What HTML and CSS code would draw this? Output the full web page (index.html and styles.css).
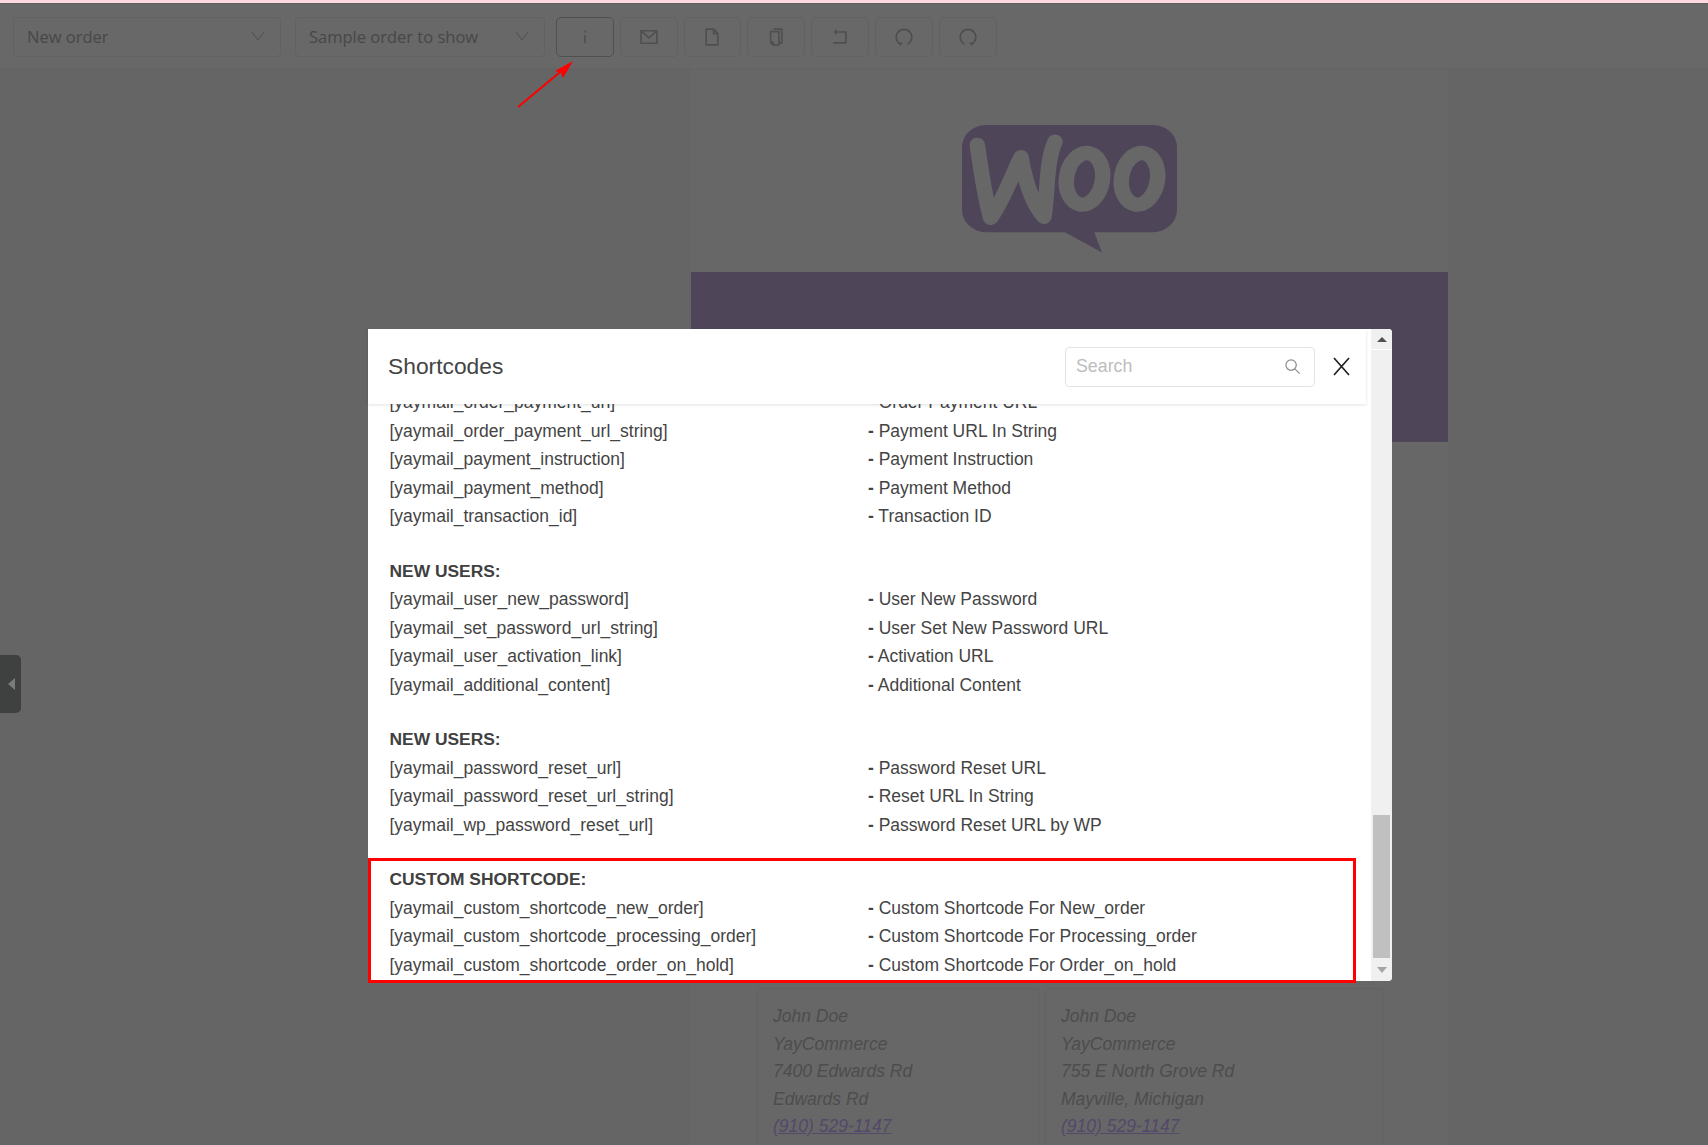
FILE: index.html
```html
<!DOCTYPE html>
<html lang="en">
<head>
<meta charset="utf-8">
<title>Shortcodes</title>
<link rel="stylesheet" href="styles.css">
</head>
<body>
<div class="pink"></div>
<header class="toolbar">
  <div class="select select-a"><span>New order</span><svg class="chev" viewBox="0 0 14 10"><path d="M1 1l6 8 6-8"/></svg></div>
  <div class="select select-b"><span>Sample order to show</span><svg class="chev" viewBox="0 0 14 10"><path d="M1 1l6 8 6-8"/></svg></div>
  <div class="btns">
    <div class="btn btn-active"><svg class="ico" viewBox="0 0 24 24"><path d="M12 4.500v2M12 9.500v10"/></svg></div>
    <div class="btn"><svg class="ico" viewBox="0 0 24 24"><path d="M2.500 4.500h19v15h-19zM2.500 4.500l9.500 8.500 9.500-8.500"/></svg></div>
    <div class="btn"><svg class="ico" viewBox="0 0 24 24"><path d="M5 2.500h9l5 5.500v13.500h-14zM14 2.500v5.500h5"/></svg></div>
    <div class="btn"><svg class="ico" viewBox="0 0 24 24"><path d="M9 2.500h10v16.500h-3.500M5.500 5.500h10v16h-7l-3-3zM5.500 18.500h3v3"/></svg></div>
    <div class="btn"><svg class="ico" viewBox="0 0 24 24"><path d="M8 6h11v13h-15"/><path class="ico-solid" d="M8 2.500v7L4 6z"/></svg></div>
    <div class="btn"><svg class="ico" viewBox="0 0 24 24"><path d="M8 20.500a9.300 9.300 0 1 1 8 0"/><path class="ico-solid" d="M5 18.500l6 .5-4 3.500z"/></svg></div>
    <div class="btn"><svg class="ico" viewBox="0 0 24 24"><path d="M8 20.500a9.300 9.300 0 1 1 8 0"/><path class="ico-solid" d="M19 18.500l-6 .5 4 3.500z"/></svg></div>
  </div>
</header>

<main class="stage">
  <section class="email">
    <div class="logo-wrap">
      <svg class="logo" viewBox="0 0 215 138" preserveAspectRatio="none">
        <rect class="logo-fill" width="215" height="115.500" rx="24"/>
        <path class="logo-fill" d="M102 115l38 22.500-8-22.500z"/>
        <path class="logo-cut" d="M15.400 21.400C19 50 23 78 28.600 100 38 88 48 60 59 34.600 63 60 70 84 82 99 86 70 84 40 93 18"/>
        <ellipse class="logo-cut" cx="122.500" cy="58" rx="18" ry="28" transform="rotate(8 122.500 58)"/>
        <ellipse class="logo-cut" cx="177.500" cy="58" rx="18" ry="28" transform="rotate(8 177.500 58)"/>
      </svg>
    </div>
    <div class="email-head"></div>
    <div class="addresses">
      <address class="addr addr-a">John Doe<br>YayCommerce<br>7400 Edwards Rd<br>Edwards Rd<br><a href="#">(910) 529-1147</a></address>
      <address class="addr addr-b">John Doe<br>YayCommerce<br>755 E North Grove Rd<br>Mayville, Michigan<br><a href="#">(910) 529-1147</a></address>
    </div>
  </section>
</main>

<div class="handle"><i class="handle-arrow"></i></div>

<svg class="pointer" viewBox="0 0 70 60"><path class="pointer-line" d="M1 49L48 10"/><path class="pointer-head" d="M56 3L38 13l6 2 2 5z"/></svg>

<div class="modal">
  <div class="modal-main">
    <div class="modal-head">
      <h2 class="modal-title">Shortcodes</h2>
      <div class="search"><input class="search-input" placeholder="Search">
        <svg class="search-ico" viewBox="0 0 18 18"><circle cx="7.500" cy="7.500" r="5.500"/><path d="M11.500 11.500l5 5"/></svg>
      </div>
      <svg class="close" viewBox="0 0 17 19" preserveAspectRatio="none"><path d="M1 1l15 17M16 1L1 18"/></svg>
    </div>
    <div class="modal-body">
      <div class="group group-first">
        <div class="row"><span>[yaymail_order_payment_url]</span><span><b>-</b> Order Payment URL</span></div>
        <div class="row"><span>[yaymail_order_payment_url_string]</span><span><b>-</b> Payment URL In String</span></div>
        <div class="row"><span>[yaymail_payment_instruction]</span><span><b>-</b> Payment Instruction</span></div>
        <div class="row"><span>[yaymail_payment_method]</span><span><b>-</b> Payment Method</span></div>
        <div class="row"><span>[yaymail_transaction_id]</span><span><b>-</b> Transaction ID</span></div>
      </div>
      <div class="group">
        <h3 class="group-title">NEW USERS:</h3>
        <div class="row"><span>[yaymail_user_new_password]</span><span><b>-</b> User New Password</span></div>
        <div class="row"><span>[yaymail_set_password_url_string]</span><span><b>-</b> User Set New Password URL</span></div>
        <div class="row"><span>[yaymail_user_activation_link]</span><span><b>-</b> Activation URL</span></div>
        <div class="row"><span>[yaymail_additional_content]</span><span><b>-</b> Additional Content</span></div>
      </div>
      <div class="group">
        <h3 class="group-title">NEW USERS:</h3>
        <div class="row"><span>[yaymail_password_reset_url]</span><span><b>-</b> Password Reset URL</span></div>
        <div class="row"><span>[yaymail_password_reset_url_string]</span><span><b>-</b> Reset URL In String</span></div>
        <div class="row"><span>[yaymail_wp_password_reset_url]</span><span><b>-</b> Password Reset URL by WP</span></div>
      </div>
      <div class="group">
        <h3 class="group-title">CUSTOM SHORTCODE:</h3>
        <div class="row"><span>[yaymail_custom_shortcode_new_order]</span><span><b>-</b> Custom Shortcode For New_order</span></div>
        <div class="row"><span>[yaymail_custom_shortcode_processing_order]</span><span><b>-</b> Custom Shortcode For Processing_order</span></div>
        <div class="row"><span>[yaymail_custom_shortcode_order_on_hold]</span><span><b>-</b> Custom Shortcode For Order_on_hold</span></div>
      </div>
    </div>
  </div>
  <div class="scrollbar">
    <div class="sb-btn"><i class="sb-up"></i></div>
    <div class="sb-track"><div class="sb-thumb"></div></div>
    <div class="sb-btn"><i class="sb-down"></i></div>
  </div>
  <div class="highlight"></div>
</div>
</body>
</html>
```

FILE: styles.css
```css
* { box-sizing: border-box; }
html, body { margin: 0; height: 1145px; overflow: hidden; }
body {
  position: relative;
  width: 1708px;
  background: #656565;
  font-family: "Liberation Sans", Arial, sans-serif;
  color: #4a4a4a;
}

.pink { height: 3px; background: #ffd9e2; }

.toolbar {
  display: flex;
  align-items: flex-start;
  height: 66px;
  padding: 13px 0 0 13px;
  background: #686868;
  border-top: 1px solid #5f5f5f;
  border-bottom: 1px solid #646464;
}
.select {
  display: flex;
  align-items: center;
  justify-content: space-between;
  height: 40px;
  padding: 0 15px 2px 13px;
  border: 1px solid #626262;
  border-radius: 4px;
  font-family: "Open Sans", sans-serif;
  font-size: 16.500px;
  color: #474747;
}
.select-a { width: 268px; }
.select-b { width: 250px; margin-left: 14px; }
.chev { width: 14px; height: 10px; fill: none; stroke: #575757; stroke-width: 1.2; }
.btns { display: flex; gap: 6px; margin-left: 11px; }
.btn {
  display: flex;
  align-items: center;
  justify-content: center;
  width: 57.800px;
  height: 40px;
  border: 1px solid #626262;
  border-radius: 5px;
}
.btn-active { border-color: #505050; }
.ico { width: 20px; height: 20px; fill: none; stroke: #4f4f4f; stroke-width: 2; }
.ico-solid { fill: #4f4f4f; stroke: none; }

.stage { padding-left: 691px; }
.email { width: 757px; height: 1076px; background: #676767; }
.logo-wrap { display: flex; justify-content: center; padding-top: 56px; }
.logo { display: block; width: 215px; height: 128px; }
.logo-fill { fill: #4e4558; }
.logo-cut { fill: none; stroke: #676767; stroke-width: 15.500; stroke-linecap: round; stroke-linejoin: round; }
.email-head { height: 170px; margin-top: 19px; background: #4e4558; }

.addresses { display: flex; gap: 6px; margin: 546px 0 0 66px; }
.addr {
  height: 200px;
  padding: 14px 15px;
  border: 1px solid #626262;
  font-size: 17.500px;
  line-height: 27.500px;
  color: #4d4d4d;
}
.addr a { color: #54486a; }
.addr-a { width: 282px; }
.addr-b { width: 338px; }

.handle {
  position: absolute;
  left: 0;
  top: 655px;
  display: flex;
  align-items: center;
  width: 21px;
  height: 58px;
  padding-left: 8px;
  background: #3f4141;
  border-radius: 0 5px 5px 0;
}
.handle-arrow {
  width: 0;
  height: 0;
  border: 6px solid transparent;
  border-left-width: 0;
  border-right: 7px solid #7a7a7a;
}

.pointer { position: absolute; left: 517px; top: 58px; width: 70px; height: 60px; }
.pointer-line { fill: none; stroke: #f00; stroke-width: 2; }
.pointer-head { fill: #f00; }

.modal {
  position: absolute;
  left: 368px;
  top: 329px;
  display: flex;
  width: 1024px;
  height: 652px;
  background: #fff;
  border-radius: 4px;
}
.modal-main { display: flex; flex-direction: column; width: 998px; min-height: 0; }
.modal-head {
  position: relative;
  z-index: 1;
  display: flex;
  align-items: center;
  flex: none;
  height: 75px;
  padding: 0 16px 0 20px;
  background: #fff;
  box-shadow: 0 1px 3px rgba(0, 0, 0, .12);
}
.modal-title { margin: 0; flex: 1; font-size: 22.800px; font-weight: 400; color: #444; }
.search { position: relative; width: 250px; height: 40px; }
.search-input {
  width: 100%;
  height: 100%;
  padding: 0 40px 0 10px;
  border: 1px solid #e3e3e3;
  border-radius: 4px;
  font: 17.800px "Liberation Sans", Arial, sans-serif;
  outline: 0;
}
.search-input::placeholder { color: #bdbdbd; opacity: 1; }
.search-ico {
  position: absolute;
  right: 14px;
  top: 11px;
  width: 17px;
  height: 17px;
  fill: none;
  stroke: #8c8c8c;
  stroke-width: 1.300;
}
.close { flex: none; width: 17px; height: 19px; margin-left: 18px; fill: none; stroke: #222; stroke-width: 1.700; }

.modal-body { flex: 1; min-height: 0; overflow: hidden; padding-left: 21.500px; font-size: 17.500px; line-height: 28.600px; color: #444; }
.group { margin-bottom: 25.600px; }
.group-first { margin-top: -16px; }
.group-title { margin: 0; font-size: 17.400px; font-weight: 700; line-height: 28px; padding-bottom: .6px; color: #404040; }
.row { display: grid; grid-template-columns: 478.500px 1fr; }

.scrollbar {
  display: flex;
  flex-direction: column;
  width: 21px;
  margin-left: 5px;
  background: #f0f0f0;
  border-radius: 0 4px 4px 0;
}
.sb-btn { display: flex; align-items: center; justify-content: center; flex: none; height: 21px; border-bottom: 1px solid transparent; }
.sb-btn:first-child { background: #f0f0f0; border-bottom-color: #fff; border-radius: 0 4px 0 0; }
.sb-up { border: 5px solid transparent; border-top-width: 0; border-bottom: 5px solid #505050; }
.sb-down { border: 5px solid transparent; border-bottom-width: 0; border-top: 6px solid #a5a5a5; }
.sb-track { flex: 1; padding: 465px 2px 0; }
.sb-thumb { height: 143px; background: #c0c0c0; }

.highlight {
  position: absolute;
  left: 0;
  top: 529px;
  width: 988px;
  height: 125px;
  border: 3px solid #f00;
  pointer-events: none;
}
```
